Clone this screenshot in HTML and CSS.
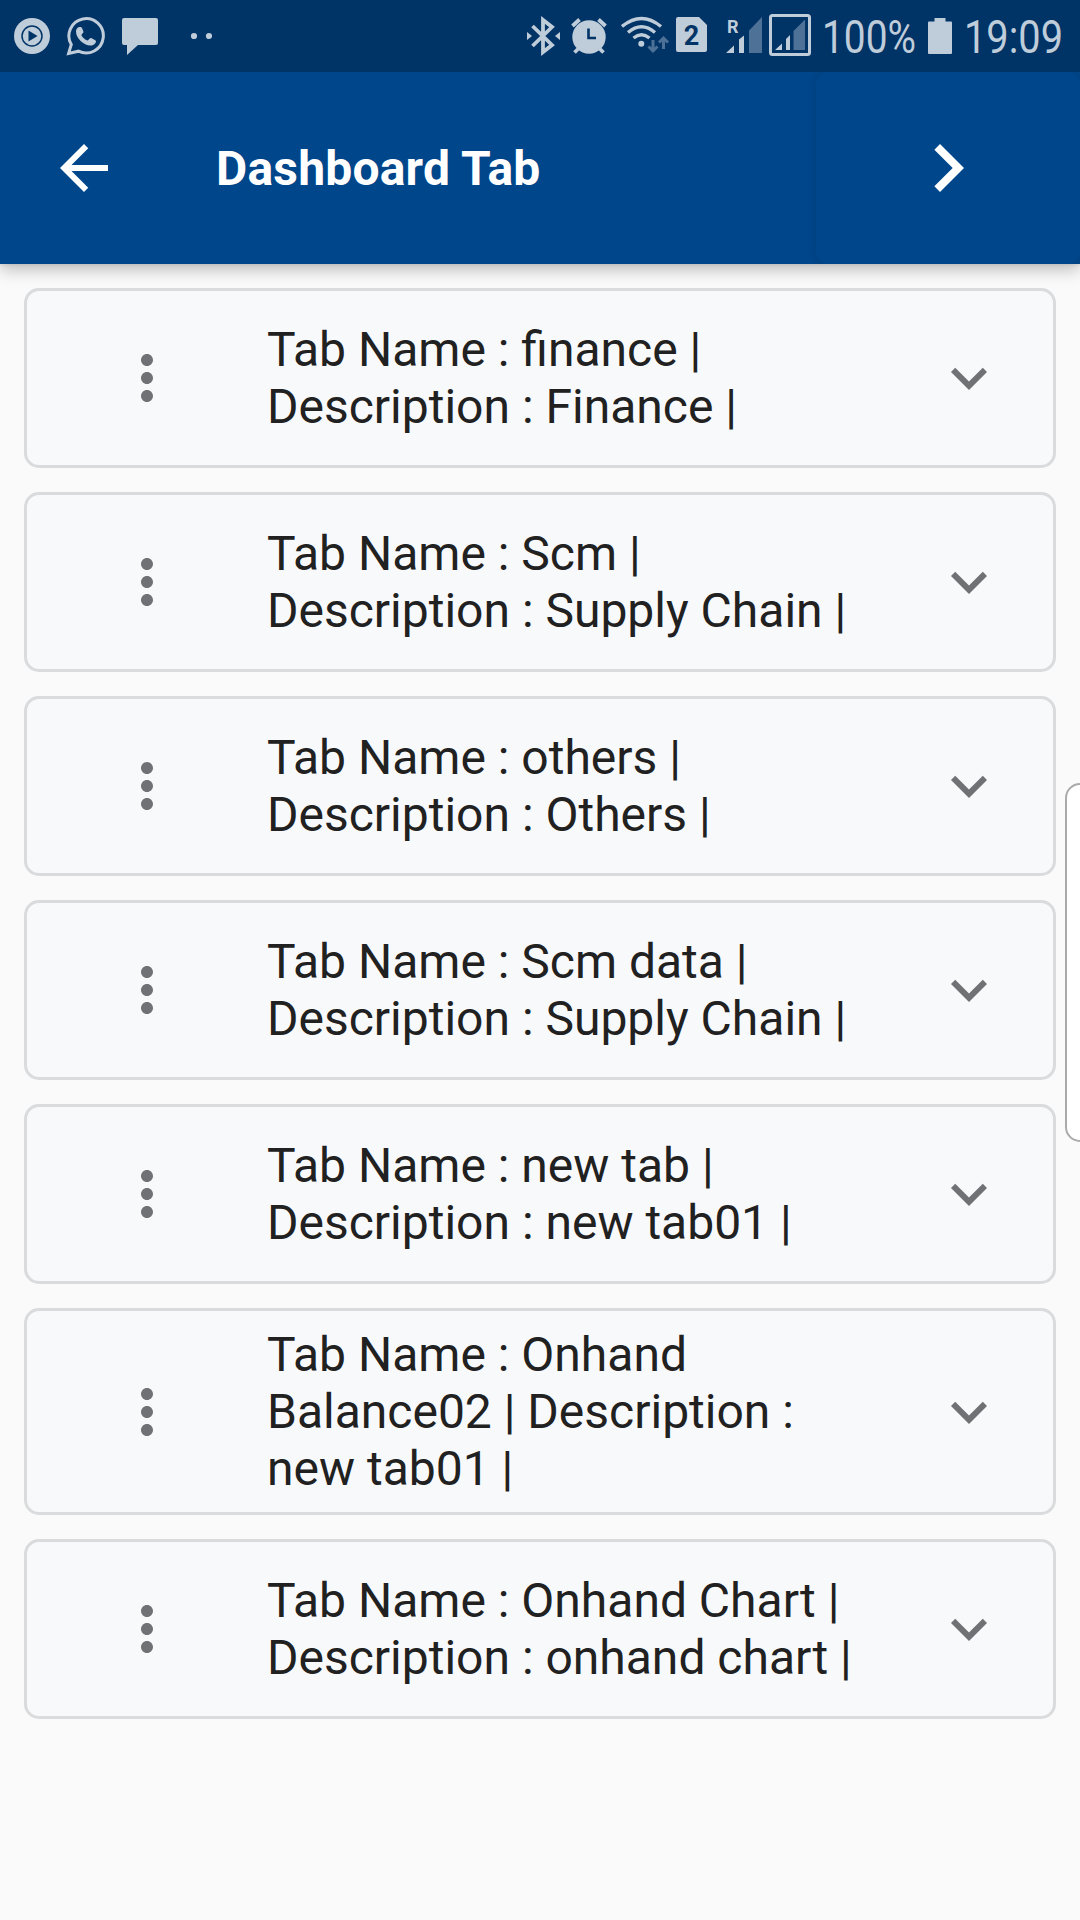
FILE: index.html
```html
<!DOCTYPE html>
<html lang="en">
<head>
<meta charset="utf-8">
<title>Dashboard Tab</title>
<link rel="stylesheet" href="styles.css">
</head>
<body>
<svg class="defs" aria-hidden="true">
  <symbol id="more" viewBox="0 0 24 24"><path d="M12 8c1.100 0 2-.9 2-2s-.9-2-2-2-2 .9-2 2 .9 2 2 2zm0 2c-1.100 0-2 .9-2 2s.9 2 2 2 2-.9 2-2-.9-2-2-2zm0 6c-1.100 0-2 .9-2 2s.9 2 2 2 2-.9 2-2-.9-2-2-2z"/></symbol>
  <symbol id="expand" viewBox="0 0 24 24"><path d="M16.590 8.590L12 13.170 7.410 8.590 6 10l6 6 6-6z"/></symbol>
</svg>
<header class="status">
  <div class="status-group">
    <svg width="36" height="72" viewBox="14 0 36 72"><circle cx="32" cy="36" r="18"/><circle class="cut-line" cx="32" cy="36" r="10"/><path class="cut" d="M28.500 30.500v11l9-5.500z"/></svg>
    <svg width="40" height="72" viewBox="66 0 40 72"><path class="line" d="M68.600 53.400L71.300 44.500A17.200 17.200 0 1 1 78.500 51.200Z"/><path d="M79 27c-2 .5-3 2.500-3 4.500 0 6.500 7.500 14 14.500 14 3 0 5.500-1.800 5.500-4.500 0-.8-4.700-3-5.500-3-1 0-2 2.500-3 2.500-1.500 0-6-4-6-5.500 0-1 2-1.800 2-3 0-.8-1.500-4.500-2.500-5z"/></svg>
    <svg width="36" height="72" viewBox="122 0 36 72"><path d="M124 18h32q2 0 2 2v23q0 2-2 2H138L127 55V45h-3q-2 0-2-2V20q0-2 2-2z"/></svg>
    <svg class="dots" width="22" height="72" viewBox="190 0 22 72"><circle cx="194" cy="36" r="3.100"/><circle cx="209" cy="36" r="3.100"/></svg>
  </div>
  <div class="status-group status-right">
    <svg width="34" height="72" viewBox="526 0 34 72"><path class="line rune" d="M532.500 26L552 45L543 52V20L552 27L532.500 46"/><path d="M527 32l5 4-5 4zM560 32l-5 4 5 4z"/></svg>
    <svg class="alarm" width="36" height="72" viewBox="571 0 36 72"><circle cx="589" cy="37" r="16.700"/><path class="line rune" d="M572.500 26l7-6.500M605.500 26l-7-6.500M574.500 52.500l5-5M603.500 52.500l-5-5"/><path class="cut-line hand" d="M588.500 28.500V38H596"/></svg>
    <svg class="wifi" width="49" height="72" viewBox="621 0 49 72"><circle cx="641.300" cy="43.700" r="3"/><path class="line wave" d="M622 26.500Q641.500 10.500 661 26.500M628 32.500Q641.500 21 655 32.500M633.500 38Q641.500 31.500 649.500 38"/><path class="dim-line" d="M653 40V50M648.500 46.500L653 51L657.500 46.500M663.500 49V39M659 42.500L663.500 38L668 42.500"/></svg>
    <svg class="sim" width="31" height="72" viewBox="676 0 31 72"><path d="M678 17h21l8 8v25q0 2-2 2H678q-2 0-2-2V19q0-2 2-2z"/><text class="sim-text" x="691.500" y="45" text-anchor="middle">2</text></svg>
    <svg class="signal" width="36" height="72" viewBox="726 0 36 72"><text class="roam-text" x="727" y="32.500">R</text><path d="M726 53l8-7.500V53zM739 53V39.500l5-4V53z"/><path class="dim" d="M749 53V30.500L762 17v36z"/></svg>
    <svg class="boxed" width="42" height="72" viewBox="769 0 42 72"><rect class="line" x="770.500" y="15.500" width="39" height="39" rx="2"/><path d="M775 50l7-6.500V50zM786 50V39l4-4v15z"/><path class="dim" d="M793.500 50V31L805 19.500V50z"/></svg>
    <svg class="percent" width="100" height="72" viewBox="819 0 100 72"><text class="status-text" x="822" y="53" textLength="94" lengthAdjust="spacingAndGlyphs">100%</text></svg>
    <svg class="battery" width="24" height="72" viewBox="928 0 24 72"><path d="M934.500 18h11v3.500h5.500q1 0 1 1V53q0 1-1 1H929q-1 0-1-1V22.500q0-1 1-1h5.500z"/></svg>
    <svg class="clock" width="105" height="72" viewBox="961 0 105 72"><text class="status-text" x="964" y="53" textLength="99" lengthAdjust="spacingAndGlyphs">19:09</text></svg>
  </div>
</header>
<nav class="appbar">
  <svg class="back" viewBox="0 0 24 24"><path d="M20 11H7.830l5.590-5.590L12 4l-8 8 8 8 1.410-1.410L7.830 13H20v-2z"/></svg>
  <h1>Dashboard Tab</h1>
  <div class="next"><svg viewBox="0 0 24 24"><path d="M10 6L8.590 7.410 13.170 12l-4.580 4.590L10 18l6-6z"/></svg></div>
</nav>
<main class="list">
  <section class="card"><svg><use href="#more"/></svg><p>Tab Name : finance |<br>Description : Finance |</p><svg><use href="#expand"/></svg></section>
  <section class="card"><svg><use href="#more"/></svg><p>Tab Name : Scm |<br>Description : Supply Chain |</p><svg><use href="#expand"/></svg></section>
  <section class="card"><svg><use href="#more"/></svg><p>Tab Name : others |<br>Description : Others |</p><svg><use href="#expand"/></svg></section>
  <section class="card"><svg><use href="#more"/></svg><p>Tab Name : Scm data |<br>Description : Supply Chain |</p><svg><use href="#expand"/></svg></section>
  <section class="card"><svg><use href="#more"/></svg><p>Tab Name : new tab |<br>Description : new tab01 |</p><svg><use href="#expand"/></svg></section>
  <section class="card"><svg><use href="#more"/></svg><p>Tab Name : Onhand<br>Balance02 | Description :<br>new tab01 |</p><svg><use href="#expand"/></svg></section>
  <section class="card"><svg><use href="#more"/></svg><p>Tab Name : Onhand Chart |<br>Description : onhand chart |</p><svg><use href="#expand"/></svg></section>
</main>
<div class="edge-handle"></div>
</body>
</html>
```
FILE: styles.css
```css
* { box-sizing: border-box; }
body {
  margin: 0;
  width: 1080px;
  height: 1920px;
  position: relative;
  overflow: hidden;
  background: #fafafa;
  font-family: Roboto, "Liberation Sans", sans-serif;
}
svg { display: block; flex: none; }
.defs { position: absolute; width: 0; height: 0; }

.status {
  height: 72px;
  padding: 0 14px;
  display: flex;
  justify-content: space-between;
  background: #003366;
  fill: #bfccd9;
}
.status-group { display: flex; gap: 16px; }
.status-right { gap: 0; }
.dots { margin-left: 16px; }
.line { fill: none; stroke: #bfccd9; stroke-width: 3; }
.wave { stroke-width: 3.400; }
.rune { stroke-width: 3.800; }
.cut { fill: #003366; }
.cut-line { fill: none; stroke: #003366; stroke-width: 1.500; }
.hand { stroke-width: 2.600; }
.dim { fill: #4d7197; }
.dim-line { fill: none; stroke: #4d7197; stroke-width: 3; }
.alarm { margin-left: 11px; }
.wifi { margin-left: 14px; }
.sim { margin-left: 6px; }
.signal { margin-left: 19px; }
.boxed { margin-left: 7px; }
.percent { margin-left: 8px; }
.battery { margin-left: 9px; }
.clock { margin-left: 9px; }
.status-text { font-size: 46px; }
.sim-text { font-size: 27px; font-weight: 700; fill: #003366; }
.roam-text { font-size: 18px; font-weight: 700; }

.appbar {
  height: 192px;
  display: flex;
  align-items: center;
  padding-left: 48px;
  background: #00468b;
  fill: #fff;
  box-shadow: 0 6px 15px rgba(0, 0, 0, .24), 0 0 4px rgba(0, 0, 0, .12);
  clip-path: inset(0 0 -24px 0);
}
.back { width: 72px; height: 72px; }
.appbar h1 {
  flex: 1;
  margin: 0 0 0 96px;
  font-size: 48px;
  line-height: 57px;
  font-weight: 700;
  letter-spacing: .2px;
  color: #fff;
}
.next {
  width: 264px;
  height: 192px;
  display: flex;
  align-items: center;
  justify-content: center;
  border-radius: 12px;
  box-shadow: 0 0 8px rgba(0, 0, 0, .14);
  clip-path: inset(0 0 0 -12px);
}
.next svg { width: 96px; height: 96px; }

.list {
  display: flex;
  flex-direction: column;
  gap: 24px;
  padding: 24px;
}
.card {
  min-height: 180px;
  display: flex;
  align-items: center;
  padding: 15px 48px 15px 84px;
  background: #f8f9fb;
  border: 3px solid #d9dbdc;
  border-radius: 15px;
  fill: #707174;
}
.card svg { width: 72px; height: 72px; }
.card p {
  flex: 1;
  margin: 0 0 0 84px;
  font-size: 48px;
  line-height: 57px;
  color: #212121;
}

.edge-handle {
  position: absolute;
  left: 1065px;
  top: 783px;
  width: 30px;
  height: 359px;
  background: #fff;
  border: 2px solid #aaa;
  border-radius: 20px;
}
```
